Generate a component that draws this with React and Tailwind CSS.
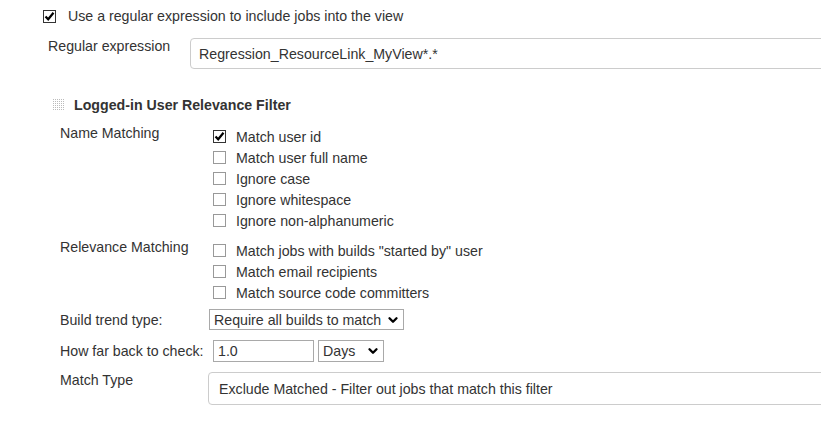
import { ChevronDown } from "lucide-react";

function Box({ checked }) {
  return (
    <span
      className={
        "inline-flex items-center justify-center w-[13px] h-[13px] shrink-0 border bg-white " +
        (checked ? "border-[#333]" : "border-[#999]")
      }
    >
      {checked && (
        <svg width="11" height="11" viewBox="0 0 11 11">
          <path d="M1.5 5.5 L4.2 8.3 L9.5 1.8" fill="none" stroke="#000" strokeWidth="2.2" />
        </svg>
      )}
    </span>
  );
}

function CheckRow({ label, checked }) {
  return (
    <div className="flex items-center h-[21px] pl-[4px]">
      <Box checked={checked} />
      <span className="ml-[10px]">{label}</span>
    </div>
  );
}

function Grip() {
  const dots = [];
  for (let r = 0; r < 6; r++)
    for (let c = 0; c < 6; c++) dots.push(<rect key={r + "-" + c} x={c * 2} y={r * 2} width="1" height="1" fill="#bbb" />);
  return (
    <svg width="12" height="12" viewBox="0 0 12 12">
      {dots}
    </svg>
  );
}

export default function App() {
  return (
    <div className="w-[821px] h-[437px] overflow-hidden bg-white text-[14.2px] leading-[16px] text-[#333] font-['Liberation_Sans',Arial,sans-serif]">
      {/* regex toggle */}
      <div className="flex items-center h-[14px] mt-[9px] pl-[43px]">
        <Box checked />
        <span className="ml-[12px]">Use a regular expression to include jobs into the view</span>
      </div>

      <div className="flex mt-[15px]">
        <div className="w-[190px] shrink-0 pl-[48px]">Regular expression</div>
        <div className="w-[700px] shrink-0 h-[31px] border border-[#ccc] rounded-[4px] px-[8px] flex items-center">
          Regression_ResourceLink_MyView*.*
        </div>
      </div>

      {/* filter section */}
      <div className="flex items-center mt-[29px] pl-[53px] h-[14px]">
        <Grip />
        <span className="ml-[9px] font-bold">Logged-in User Relevance Filter</span>
      </div>

      <div className="pl-[60px] mt-[14px]">
        <div className="flex">
          <div className="w-[149px] shrink-0 -mt-[1px]">Name Matching</div>
          <div>
            <CheckRow label="Match user id" checked />
            <CheckRow label="Match user full name" />
            <CheckRow label="Ignore case" />
            <CheckRow label="Ignore whitespace" />
            <CheckRow label="Ignore non-alphanumeric" />
          </div>
        </div>

        <div className="flex mt-[9px]">
          <div className="w-[149px] shrink-0 -mt-[1px]">Relevance Matching</div>
          <div>
            <CheckRow label={'Match jobs with builds "started by" user'} />
            <CheckRow label="Match email recipients" />
            <CheckRow label="Match source code committers" />
          </div>
        </div>

        <div className="flex items-center mt-[6px]">
          <div className="w-[149px] shrink-0">Build trend type:</div>
          <div className="flex items-center justify-between w-[195px] h-[21px] border border-[#a9a9a9] pl-[4px] pr-[3px]">
            <span>Require all builds to match</span>
            <ChevronDown size={14} strokeWidth={4} color="#000" />
          </div>
        </div>

        <div className="flex items-center mt-[10px]">
          <div className="w-[153px] shrink-0">How far back to check:</div>
          <div className="flex items-center w-[101px] h-[22px] border border-[#a9a9a9] px-[4px]">1.0</div>
          <div className="flex items-center justify-between ml-[4px] w-[66px] h-[22px] border border-[#a9a9a9] pl-[4px] pr-[3px]">
            <span>Days</span>
            <ChevronDown size={14} strokeWidth={4} color="#000" />
          </div>
        </div>

        <div className="flex mt-[10px]">
          <div className="w-[148px] shrink-0">Match Type</div>
          <div className="w-[700px] shrink-0 h-[33px] border border-[#ccc] rounded-[4px] px-[10px] flex items-center">
            Exclude Matched - Filter out jobs that match this filter
          </div>
        </div>
      </div>
    </div>
  );
}
